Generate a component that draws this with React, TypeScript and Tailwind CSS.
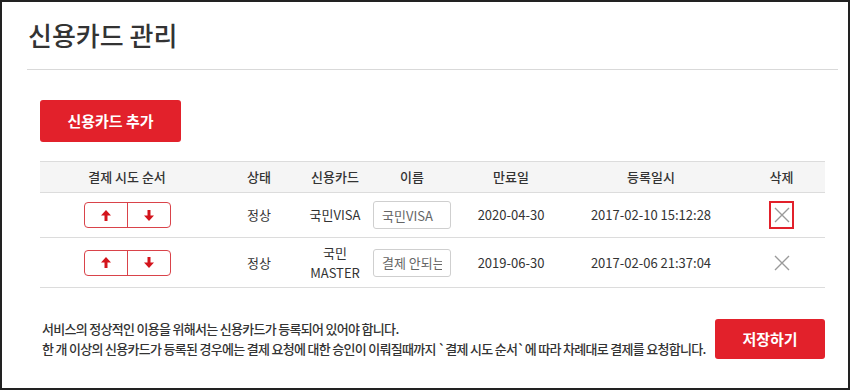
import { useState } from "react";

type Card = {
    id: number;
    status: string;
    card: string;
    name: string;
    expires: string;
    registered: string;
};

const cards: Card[] = [
    { id: 1, status: "정상", card: "국민VISA", name: "국민VISA", expires: "2020-04-30", registered: "2017-02-10 15:12:28" },
    { id: 2, status: "정상", card: "국민 MASTER", name: "결제 안되는 카드", expires: "2019-06-30", registered: "2017-02-06 21:37:04" },
];

const cols = "grid grid-cols-[174px_90px_62px_92px_106px_174px_87px] items-center text-center";

const ArrowUp = () => (
    <svg width="10" height="11" viewBox="0 0 10 11" className="fill-[#d3141c]">
        <path d="M5 0 L10 5.5 H6.5 V11 H3.5 V5.5 H0 Z" />
    </svg>
);

const ArrowDown = () => (
    <svg width="10" height="11" viewBox="0 0 10 11" className="fill-[#d3141c]">
        <path d="M5 11 L10 5.5 H6.5 V0 H3.5 V5.5 H0 Z" />
    </svg>
);

const CloseIcon = () => (
    <svg width="16" height="16" viewBox="0 0 16 16" className="stroke-[#9a9a9a]" strokeWidth="1.4">
        <path d="M1 1 L15 15 M15 1 L1 15" />
    </svg>
);

const App = () => {
    const [focused, setFocused] = useState(1);

    return (
        <div className="w-[850px] h-[390px] border-2 border-[#222] bg-white text-[#333] font-['Noto_Sans_CJK_KR','Noto_Sans',sans-serif] overflow-hidden">
            <h1 className="pl-[26px] pt-[15px] text-[26px] leading-[36px] font-medium text-[#333]">신용카드 관리</h1>
            <div className="mt-[16px] ml-[25px] mr-[10px] h-px bg-[#d9d9d9]" />

            <div className="pl-[38px] pr-[23px]">
                <button className="mt-[30px] w-[141px] h-[42px] rounded-[3px] bg-[#e2212b] text-white text-[15px] font-bold">
                    신용카드 추가
                </button>

                <div className="mt-[19px] border-t border-[#dcdcdc] text-[13px]">
                    <div className={`${cols} h-[31px] bg-[#f5f5f5] border-b border-[#dcdcdc] font-medium`}>
                        <div>결제 시도 순서</div>
                        <div>상태</div>
                        <div>신용카드</div>
                        <div>이름</div>
                        <div>만료일</div>
                        <div>등록일시</div>
                        <div>삭제</div>
                    </div>
                    {cards.map((c, i) => (
                        <div key={c.id} className={`${cols} ${i === 0 ? "h-[45px]" : "h-[50px]"} border-b border-[#dcdcdc]`}>
                            <div className="flex justify-center">
                                <div className="flex w-[87px] h-[26px] border border-[#d9434a] rounded-[4px]">
                                    <button className="flex-1 flex items-center justify-center border-r border-[#d9434a]">
                                        <ArrowUp />
                                    </button>
                                    <button className="flex-1 flex items-center justify-center">
                                        <ArrowDown />
                                    </button>
                                </div>
                            </div>
                            <div>{c.status}</div>
                            <div className="leading-[20px] px-[4px]">{c.card}</div>
                            <div className="flex justify-center">
                                <input
                                    defaultValue={c.name}
                                    className="w-[78px] h-[28px] border border-[#cfcfcf] rounded-[3px] px-[8px] text-[13px] text-[#666] outline-none"
                                />
                            </div>
                            <div>{c.expires}</div>
                            <div>{c.registered}</div>
                            <div className="flex justify-center">
                                <button
                                    onClick={() => setFocused(c.id)}
                                    className={`w-[25px] h-[28px] flex items-center justify-center border-2 ${focused === c.id ? "border-[#e2212b]" : "border-transparent"}`}
                                >
                                    <CloseIcon />
                                </button>
                            </div>
                        </div>
                    ))}
                </div>

                <div className="mt-[31px] flex items-center justify-between gap-[4px]">
                    <p className="text-[13px] leading-[20px] font-medium text-[#333] pl-[2px] whitespace-nowrap tracking-[-0.7px]">
                        서비스의 정상적인 이용을 위해서는 신용카드가 등록되어 있어야 합니다.
                        <br />
                        한 개 이상의 신용카드가 등록된 경우에는 결제 요청에 대한 승인이 이뤄질때까지 `결제 시도 순서`에 따라 차례대로 결제를 요청합니다.
                    </p>
                    <button className="w-[110px] h-[40px] rounded-[3px] bg-[#e2212b] text-white text-[15px] font-bold shrink-0">
                        저장하기
                    </button>
                </div>
            </div>
        </div>
    );
};

export default App;
